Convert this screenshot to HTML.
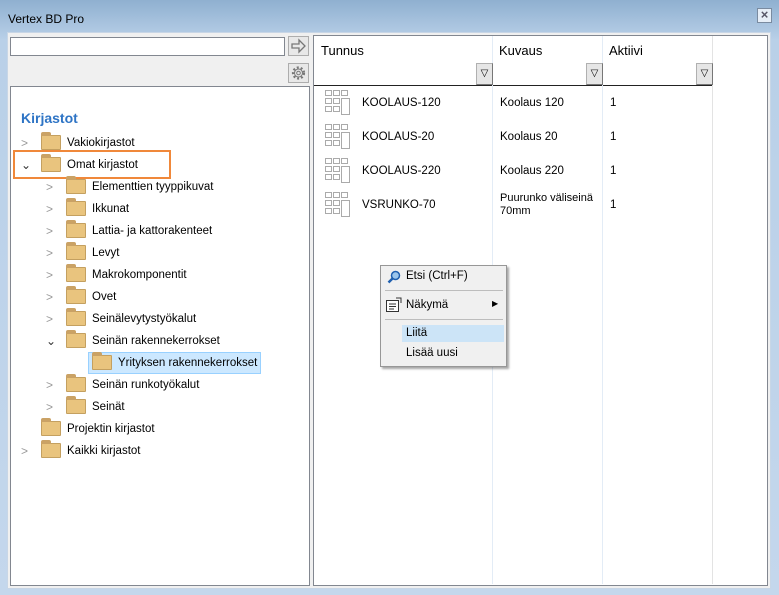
<!DOCTYPE html><html><head><style>
*{margin:0;padding:0;box-sizing:border-box}
body{width:779px;height:595px;overflow:hidden;font-family:"Liberation Sans",sans-serif;font-size:11.5px;color:#000;background:linear-gradient(#8fb0d0,#b9d0e8 40px,#c4d7ec);position:relative}
.abs{position:absolute}
.title{left:8px;top:12px;font-size:12px}
.inner{left:7px;top:32px;width:764px;height:557px;background:#f0f0f0;border:1px solid #c8d6e6}
.box{background:#fff;border:1px solid #828790}
.btn{background:#e8e8e8;border:1px solid #adadad}
.tree div.r{position:absolute;height:20px;line-height:20px;white-space:nowrap}
.fold{display:inline-block;width:20px;height:15px;background:#e9c47e;border:1px solid #c4a060;border-radius:1px;vertical-align:middle;position:relative;margin-right:6px}
.fold:before{content:"";position:absolute;left:-1px;top:-4px;width:10px;height:4px;background:#caa265;border-radius:2px 2px 0 0}
.chev{position:absolute;color:#999;font-size:12px}
.row{position:absolute;left:0;height:34px;width:453px}
.ico{position:absolute;left:11px;top:4px;width:28px;height:26px}
.filt{position:absolute;width:17px;height:22px;background:#e6e6e6;border:1px solid #b0b0b0;border-bottom-color:#777;border-right-color:#777;font-size:10px;text-align:center;line-height:20px}
</style></head><body>
<div class="abs title">Vertex BD Pro</div>
<div class="abs btn" style="left:757px;top:8px;width:15px;height:15px;background:#e6eef7;border-color:#7a8ba0;color:#556;font-size:13px;line-height:12px;text-align:center;font-weight:bold">×</div>
<div class="abs inner"></div>
<div class="abs box" style="left:10px;top:37px;width:275px;height:19px"></div>
<div class="abs btn" style="left:288px;top:36px;width:21px;height:20px"><svg width="19" height="18"><path d="M3 7h7V3l6 6-6 6v-4H3z" fill="none" stroke="#777" stroke-width="1.3"/></svg></div>
<div class="abs btn" style="left:288px;top:63px;width:21px;height:20px"><svg width="19" height="18"><circle cx="9.5" cy="9" r="5.5" fill="none" stroke="#777" stroke-width="2.2" stroke-dasharray="2 2"/><circle cx="9.5" cy="9" r="4" fill="none" stroke="#777"/><circle cx="9.5" cy="9" r="1.8" fill="none" stroke="#777"/></svg></div>
<div class="abs box tree" style="left:10px;top:86px;width:300px;height:500px">
<div class="r" style="left:10px;top:21px;color:#2e74c5;font-weight:bold;font-size:14px">Kirjastot</div>
<div class="r" style="left:10px;top:46px"><span class="chev" style="left:0">&gt;</span><span style="margin-left:20px" class="fold"></span>Vakiokirjastot</div>
<div class="abs" style="left:2px;top:63px;width:158px;height:29px;border:2px solid #f0883a"></div>
<div class="r" style="left:10px;top:68px"><span class="chev" style="left:0;color:#333">⌄</span><span style="margin-left:20px" class="fold"></span>Omat kirjastot</div>
<div class="r" style="left:35px;top:90px"><span class="chev">&gt;</span><span style="margin-left:20px" class="fold"></span>Elementtien tyyppikuvat</div>
<div class="r" style="left:35px;top:112px"><span class="chev">&gt;</span><span style="margin-left:20px" class="fold"></span>Ikkunat</div>
<div class="r" style="left:35px;top:134px"><span class="chev">&gt;</span><span style="margin-left:20px" class="fold"></span>Lattia- ja kattorakenteet</div>
<div class="r" style="left:35px;top:156px"><span class="chev">&gt;</span><span style="margin-left:20px" class="fold"></span>Levyt</div>
<div class="r" style="left:35px;top:178px"><span class="chev">&gt;</span><span style="margin-left:20px" class="fold"></span>Makrokomponentit</div>
<div class="r" style="left:35px;top:200px"><span class="chev">&gt;</span><span style="margin-left:20px" class="fold"></span>Ovet</div>
<div class="r" style="left:35px;top:222px"><span class="chev">&gt;</span><span style="margin-left:20px" class="fold"></span>Seinälevytystyökalut</div>
<div class="r" style="left:35px;top:244px"><span class="chev" style="color:#333">⌄</span><span style="margin-left:20px" class="fold"></span>Seinän rakennekerrokset</div>
<div class="abs" style="left:77px;top:265px;width:173px;height:22px;background:#cce8ff;border:1px solid #99d1ff"></div>
<div class="r" style="left:81px;top:266px"><span class="fold"></span>Yrityksen rakennekerrokset</div>
<div class="r" style="left:35px;top:288px"><span class="chev">&gt;</span><span style="margin-left:20px" class="fold"></span>Seinän runkotyökalut</div>
<div class="r" style="left:35px;top:310px"><span class="chev">&gt;</span><span style="margin-left:20px" class="fold"></span>Seinät</div>
<div class="r" style="left:30px;top:332px"><span class="fold"></span>Projektin kirjastot</div>
<div class="r" style="left:10px;top:354px"><span class="chev">&gt;</span><span style="margin-left:20px" class="fold"></span>Kaikki kirjastot</div>
</div>
<div class="abs box" style="left:313px;top:35px;width:455px;height:551px;overflow:hidden">
<div class="abs" style="left:0;top:0;width:398px;height:50px;border-bottom:1px solid #222;background:#fff"></div>
<div class="abs" style="left:178px;top:0;height:548px;border-left:1px solid #e3ecf6"></div>
<div class="abs" style="left:288px;top:0;height:548px;border-left:1px solid #e3ecf6"></div>
<div class="abs" style="left:398px;top:0;height:548px;border-left:1px solid #e3e3e3"></div>
<div class="abs" style="left:7px;top:7px;font-size:13px">Tunnus</div>
<div class="abs" style="left:185px;top:7px;font-size:13px">Kuvaus</div>
<div class="abs" style="left:295px;top:7px;font-size:13px">Aktiivi</div>
<div class="filt" style="left:162px;top:27px">▽</div>
<div class="filt" style="left:272px;top:27px">▽</div>
<div class="filt" style="left:382px;top:27px">▽</div>
<div class="row" style="top:50px"><svg class="ico"><g fill="none" stroke="#aaa"><rect x="0.5" y="0.5" width="6" height="5"/><rect x="8.5" y="0.5" width="6" height="5"/><rect x="16.5" y="0.5" width="6" height="5"/><rect x="0.5" y="8.5" width="6" height="5"/><rect x="8.5" y="8.5" width="6" height="5"/><rect x="0.5" y="16.5" width="6" height="5"/><rect x="8.5" y="16.5" width="6" height="5"/><rect x="16.5" y="8.5" width="8" height="16"/></g></svg><span class="abs" style="left:48px;top:11px">KOOLAUS-120</span><span class="abs" style="left:186px;top:11px">Koolaus 120</span><span class="abs" style="left:296px;top:11px">1</span></div>
<div class="row" style="top:84px"><svg class="ico"><g fill="none" stroke="#aaa"><rect x="0.5" y="0.5" width="6" height="5"/><rect x="8.5" y="0.5" width="6" height="5"/><rect x="16.5" y="0.5" width="6" height="5"/><rect x="0.5" y="8.5" width="6" height="5"/><rect x="8.5" y="8.5" width="6" height="5"/><rect x="0.5" y="16.5" width="6" height="5"/><rect x="8.5" y="16.5" width="6" height="5"/><rect x="16.5" y="8.5" width="8" height="16"/></g></svg><span class="abs" style="left:48px;top:11px">KOOLAUS-20</span><span class="abs" style="left:186px;top:11px">Koolaus 20</span><span class="abs" style="left:296px;top:11px">1</span></div>
<div class="row" style="top:118px"><svg class="ico"><g fill="none" stroke="#aaa"><rect x="0.5" y="0.5" width="6" height="5"/><rect x="8.5" y="0.5" width="6" height="5"/><rect x="16.5" y="0.5" width="6" height="5"/><rect x="0.5" y="8.5" width="6" height="5"/><rect x="8.5" y="8.5" width="6" height="5"/><rect x="0.5" y="16.5" width="6" height="5"/><rect x="8.5" y="16.5" width="6" height="5"/><rect x="16.5" y="8.5" width="8" height="16"/></g></svg><span class="abs" style="left:48px;top:11px">KOOLAUS-220</span><span class="abs" style="left:186px;top:11px">Koolaus 220</span><span class="abs" style="left:296px;top:11px">1</span></div>
<div class="row" style="top:152px"><svg class="ico"><g fill="none" stroke="#aaa"><rect x="0.5" y="0.5" width="6" height="5"/><rect x="8.5" y="0.5" width="6" height="5"/><rect x="16.5" y="0.5" width="6" height="5"/><rect x="0.5" y="8.5" width="6" height="5"/><rect x="8.5" y="8.5" width="6" height="5"/><rect x="0.5" y="16.5" width="6" height="5"/><rect x="8.5" y="16.5" width="6" height="5"/><rect x="16.5" y="8.5" width="8" height="16"/></g></svg><span class="abs" style="left:48px;top:11px">VSRUNKO-70</span><span class="abs" style="left:186px;top:4px;line-height:13px;font-size:11px">Puurunko väliseinä<br>70mm</span><span class="abs" style="left:296px;top:11px">1</span></div>
</div>
<div class="abs" style="left:380px;top:265px;width:127px;height:102px;background:#f0f0f0;border:1px solid #979797;box-shadow:2px 2px 2px rgba(0,0,0,.35)">
<svg class="abs" style="left:6px;top:4px" width="14" height="14"><circle cx="8.5" cy="5.5" r="4" fill="#9cc6ec" stroke="#2060b0" stroke-width="1.5"/><path d="M6 8L1.5 12.5" stroke="#2060b0" stroke-width="2.5"/></svg>
<div class="abs" style="left:25px;top:4px">Etsi (Ctrl+F)</div>
<div class="abs" style="left:4px;top:24px;width:118px;border-top:1px solid #bdbdbd"></div>
<svg class="abs" style="left:5px;top:31px" width="17" height="16"><rect x="0.5" y="3.5" width="12" height="11" fill="#fff" stroke="#333"/><path d="M3 7h7M3 9.5h7M3 12h5" stroke="#333"/><path d="M10 1h5v5" fill="none" stroke="#333"/></svg>
<div class="abs" style="left:25px;top:33px">Näkymä</div>
<div class="abs" style="left:111px;top:33px;font-size:8px">▶</div>
<div class="abs" style="left:4px;top:53px;width:118px;border-top:1px solid #bdbdbd"></div>
<div class="abs" style="left:21px;top:59px;width:102px;height:17px;background:#cce4f7"></div>
<div class="abs" style="left:25px;top:61px">Liitä</div>
<div class="abs" style="left:25px;top:81px">Lisää uusi</div>
</div>
</body></html>
